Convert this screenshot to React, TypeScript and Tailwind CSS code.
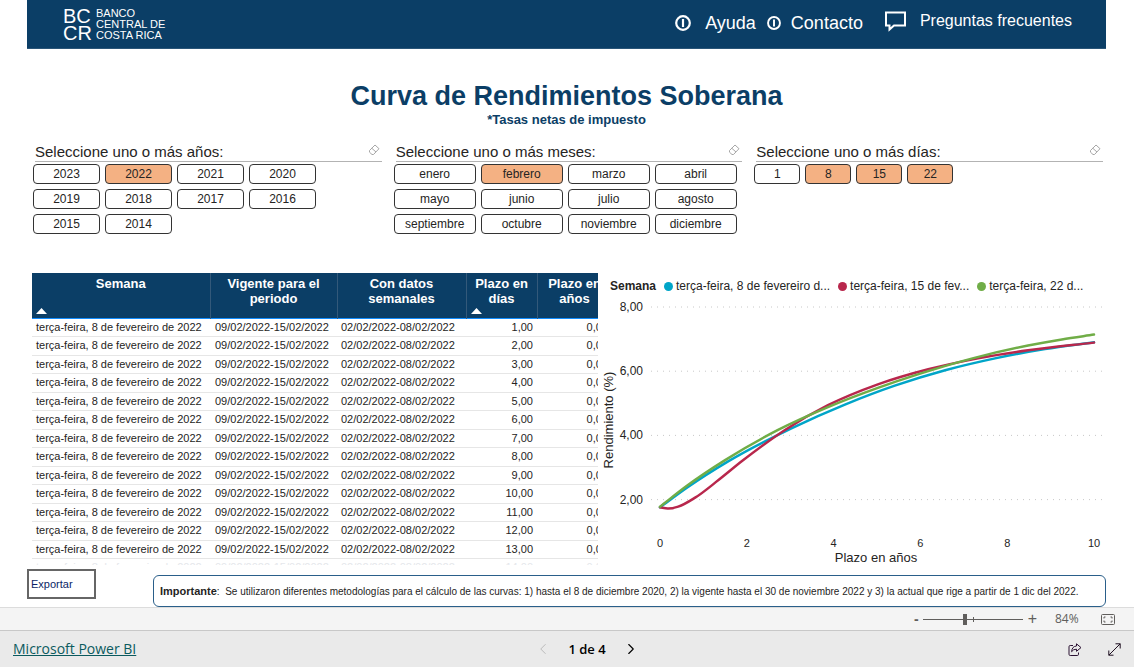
import { useState } from 'react';
import { ChevronLeft, ChevronRight } from 'lucide-react';
import clsx from 'clsx';

const YEARS = ['2023', '2022', '2021', '2020', '2019', '2018', '2017', '2016', '2015', '2014'];
const MONTHS = [
    'enero', 'febrero', 'marzo', 'abril',
    'mayo', 'junio', 'julio', 'agosto',
    'septiembre', 'octubre', 'noviembre', 'diciembre',
];
const DAYS = ['1', '8', '15', '22'];

const ROWS = Array.from({ length: 14 }, (_, i) => ({
    week: 'terça-feira, 8 de fevereiro de 2022',
    period: '09/02/2022-15/02/2022',
    data: '02/02/2022-08/02/2022',
    days: `${i + 1},00`,
    years: '0,00',
}));

type Point = [number, number];

// [plazo en años, rendimiento %]
const SERIES: { label: string; color: string; points: Point[] }[] = [
    {
        label: 'terça-feira, 8 de fevereiro d...',
        color: '#00a5c8',
        points: [[0, 1.76], [0.62, 2.37], [1.57, 3.19], [3.04, 4.23], [4.26, 4.96], [5.41, 5.55], [6.57, 6.03], [7.72, 6.4], [8.87, 6.69], [10, 6.9]],
    },
    {
        label: 'terça-feira, 15 de fev...',
        color: '#b8274c',
        points: [[0, 1.76], [0.18, 1.72], [0.42, 1.78], [0.81, 2.06], [1.34, 2.6], [1.89, 3.2], [2.88, 4.17], [3.87, 4.94], [5.02, 5.59], [6.18, 6.06], [7.33, 6.4], [8.48, 6.65], [10, 6.89]],
    },
    {
        label: 'terça-feira, 22 d...',
        color: '#70ad47',
        points: [[0, 1.78], [0.62, 2.43], [1.5, 3.23], [2.72, 4.17], [3.87, 4.88], [5.02, 5.48], [5.94, 5.9], [7.2, 6.4], [8.48, 6.8], [9.26, 6.99], [10, 7.14]],
    },
];

const scaleX = (t: number) => 58 + t * 43.4;
const scaleY = (v: number) => 10 + (8 - v) * 32.1;

function smoothPath(points: Point[]) {
    const p = points.map(([t, v]) => [scaleX(t), scaleY(v)]);
    // monotone in x, tangents from the neighbouring points
    const slope = p.map((_, i) => {
        const a = p[i - 1];
        const b = p[i];
        const c = p[i + 1];
        if (!a) return (c[1] - b[1]) / (c[0] - b[0]);
        if (!c) return (b[1] - a[1]) / (b[0] - a[0]);
        const h0 = b[0] - a[0];
        const h1 = c[0] - b[0];
        return (((b[1] - a[1]) / h0) * h1 + ((c[1] - b[1]) / h1) * h0) / (h0 + h1);
    });
    let d = `M${p[0][0]} ${p[0][1]}`;
    for (let i = 1; i < p.length; i++) {
        const h = (p[i][0] - p[i - 1][0]) / 3;
        d += `C${p[i - 1][0] + h} ${p[i - 1][1] + h * slope[i - 1]} ${p[i][0] - h} ${p[i][1] - h * slope[i]} ${p[i][0]} ${p[i][1]}`;
    }
    return d;
}

function InfoIcon({ className }: { className?: string }) {
    return (
        <svg className={className} viewBox="0 0 16 16" fill="none" stroke="currentColor">
            <circle cx="8" cy="8" r="6.8" strokeWidth="2.2" />
            <path d="M8 4v8" strokeWidth="2.2" />
        </svg>
    );
}

function Logo() {
    return (
        <svg className="h-10 w-[106px]" viewBox="0 0 106 40" fill="#fff" role="img" aria-label="Banco Central de Costa Rica">
            <g fontSize="20">
                <text x="0" y="19">BC</text>
                <text x="0" y="36">CR</text>
            </g>
            <g fontSize="11">
                <text x="33" y="13">BANCO</text>
                <text x="33" y="24">CENTRAL DE</text>
                <text x="33" y="35">COSTA RICA</text>
            </g>
        </svg>
    );
}

function EraserIcon() {
    return (
        <svg className="h-3 w-3" viewBox="0 0 12 12" fill="none" stroke="#a6a6a6" strokeLinejoin="round">
            <path d="M1.500 6.500 7 1 11 4.700 5.500 10.500H4L1.500 8.200Z" />
            <path d="M3.800 4.300 8 8" />
        </svg>
    );
}

interface SlicerProps {
    title: string;
    options: string[];
    initial: string[];
    gridClass: string;
}

function Slicer({ title, options, initial, gridClass }: SlicerProps) {
    const [selected, setSelected] = useState(initial);

    const toggle = (option: string) => {
        setSelected(selected.includes(option) ? selected.filter((o) => o !== option) : [...selected, option]);
    };

    return (
        <section>
            <div className="mb-0.5 ml-0.5 flex h-5 items-center justify-between border-b border-[#b3b3b3]">
                <h2 className="text-[15px] leading-5 text-[#252423]">{title}</h2>
                <button type="button" aria-label="Borrar selecciones" className="mr-0.5 mb-1" onClick={() => setSelected([])}>
                    <EraserIcon />
                </button>
            </div>
            <div className={clsx('grid gap-[5px]', gridClass)}>
                {options.map((option) => (
                    <button
                        key={option}
                        type="button"
                        aria-pressed={selected.includes(option)}
                        onClick={() => toggle(option)}
                        className={clsx(
                            'h-5 rounded border border-[#333] text-xs leading-none text-[#252423]',
                            selected.includes(option) ? 'bg-[#f4b183]' : 'bg-white'
                        )}
                    >
                        {option}
                    </button>
                ))}
            </div>
        </section>
    );
}

function HeaderCell({ label, sorted }: { label: string; sorted?: boolean }) {
    return (
        <th scope="col" className="relative h-[45px] border-r border-[#33597a] px-1 pt-[3px] align-top text-[13px] leading-[15px] font-bold">
            {label}
            {sorted && (
                <svg className="absolute bottom-1 left-1 h-[6px] w-[11px]" viewBox="0 0 11 6" fill="#fff">
                    <path d="M0 6 5.5 0 11 6Z" />
                </svg>
            )}
        </th>
    );
}

function YieldTable() {
    return (
        <div className="h-[292px] min-w-0 flex-[566] overflow-hidden">
            <table className="w-[580px] table-fixed border-collapse text-[11px] leading-[13px] text-[#252423]">
                <colgroup>
                    <col className="w-[178px]" />
                    <col className="w-[127px]" />
                    <col className="w-[129px]" />
                    <col className="w-[71px]" />
                    <col className="w-[75px]" />
                </colgroup>
                <thead className="border-b border-[#118dff] bg-[#0b3e66] text-white">
                    <tr>
                        <HeaderCell label="Semana" sorted />
                        <HeaderCell label="Vigente para el periodo" />
                        <HeaderCell label="Con datos semanales" />
                        <HeaderCell label="Plazo en días" sorted />
                        <HeaderCell label="Plazo en años" />
                    </tr>
                </thead>
                <tbody>
                    {ROWS.map((row) => (
                        <tr
                            key={row.days}
                            className="border-b border-[#e6e6e6] whitespace-nowrap last:text-gray-200 odd:h-[18px] even:h-[19px]"
                        >
                            <td className="pl-1">{row.week}</td>
                            <td className="pl-[5px]">{row.period}</td>
                            <td className="pl-1">{row.data}</td>
                            <td className="pr-1 text-right">{row.days}</td>
                            <td className="pr-1 text-right">{row.years}</td>
                        </tr>
                    ))}
                </tbody>
            </table>
        </div>
    );
}

function YieldChart() {
    return (
        <div className="min-w-0 flex-[504]">
            <div className="flex h-6 items-center gap-2 pt-0.5 pl-2 text-xs whitespace-nowrap text-[#252423]">
                <span className="font-bold">Semana</span>
                {SERIES.map((s) => (
                    <span key={s.label} className="flex items-center gap-[3px]">
                        <svg className="h-[9px] w-[9px]" viewBox="0 0 9 9">
                            <circle cx="4.5" cy="4.5" r="4.5" fill={s.color} />
                        </svg>
                        {s.label}
                    </span>
                ))}
            </div>
            <svg className="w-full" viewBox="0 0 504 268" fill="#252423" fontSize="12">
                {[8, 6, 4, 2].map((v) => (
                    <g key={v}>
                        <text x="41" y={scaleY(v) + 4} textAnchor="end">{`${v},00`}</text>
                        <path d={`M49 ${scaleY(v)}H500`} stroke="#c8c8c8" strokeDasharray="1 5" />
                    </g>
                ))}
                {[0, 2, 4, 6, 8, 10].map((t) => (
                    <text key={t} x={scaleX(t)} y="250" textAnchor="middle" fontSize="11">{t}</text>
                ))}
                <text x="274" y="265" textAnchor="middle" fontSize="13">Plazo en años</text>
                <text transform="translate(11 123) rotate(-90)" textAnchor="middle" fontSize="13">Rendimiento (%)</text>
                {SERIES.map((s) => (
                    <path key={s.label} d={smoothPath(s.points)} fill="none" stroke={s.color} strokeWidth="2.5" strokeLinecap="round" />
                ))}
            </svg>
        </div>
    );
}

function ZoomBar() {
    const [zoom, setZoom] = useState(42);

    return (
        <div className="flex h-[23px] items-center justify-end border-t border-[#dcdcdc] bg-[#f4f4f4] pr-[19px] text-[#605e5c]">
            <button type="button" aria-label="Alejar" className="mr-1 text-sm leading-none font-bold" onClick={() => setZoom(zoom - 5)}>-</button>
            <div className="relative flex h-3 w-[100px] items-center">
                <span className="absolute left-[50px] h-[5px] w-px bg-[#605e5c]" />
                <input
                    type="range"
                    aria-label="Zoom"
                    value={zoom}
                    onChange={(e) => setZoom(Number(e.target.value))}
                    className="h-px w-full appearance-none bg-[#605e5c] [&::-webkit-slider-thumb]:h-[11px] [&::-webkit-slider-thumb]:w-1 [&::-webkit-slider-thumb]:appearance-none [&::-webkit-slider-thumb]:bg-[#605e5c]"
                />
            </div>
            <button type="button" aria-label="Acercar" className="ml-[5px] text-base leading-none" onClick={() => setZoom(zoom + 5)}>+</button>
            <span className="ml-[18px] w-[26px] font-['Open_Sans',sans-serif] text-xs">84%</span>
            <button type="button" aria-label="Ajustar a la página" className="ml-5">
                <svg className="h-[11px] w-[14px]" viewBox="0 0 14 11" fill="none" stroke="#605e5c">
                    <rect x=".5" y=".5" width="13" height="10" rx="1" />
                    <path d="M3 4.500V3H4.500M9.500 3H11V4.500M11 6.500V8H9.500M4.500 8H3V6.500" />
                </svg>
            </button>
        </div>
    );
}

function Footer() {
    return (
        <footer className="grid flex-1 grid-cols-3 items-center border-t border-[#c8c8c8] bg-[#eaeaea] px-[13px] py-2 font-['Open_Sans',sans-serif] text-black">
            <a href="#" className="text-sm leading-5 text-[#0b5a5e] underline">Microsoft Power BI</a>
            <div className="ml-10 flex items-center justify-center gap-4 text-[13px] leading-5 font-semibold">
                <button type="button" aria-label="Página anterior" disabled>
                    <ChevronLeft size={18} strokeWidth={1.2} color="#b5b5b5" />
                </button>
                <span>1 de 4</span>
                <button type="button" aria-label="Página siguiente">
                    <ChevronRight size={18} strokeWidth={1.5} />
                </button>
            </div>
            <div className="flex items-center justify-end gap-[26px]">
                <button type="button" aria-label="Compartir">
                    <svg className="h-[13px] w-[14px]" viewBox="0 0 14 13" fill="none" stroke="#2b1233" strokeLinejoin="round">
                        <path d="M5 2.500H2.200Q1 2.500 1 3.700V11.300Q1 12.500 2.200 12.500H9.300Q10.500 12.500 10.500 11.300V9.500" />
                        <path d="M8.500.8 13 4.600 8.500 8.300V6.200Q5.300 6 3.600 8.700 4 3.300 8.500 3Z" />
                    </svg>
                </button>
                <button type="button" aria-label="Pantalla completa">
                    <svg className="h-[13px] w-[13px]" viewBox="0 0 13 13" fill="none" stroke="#1f1022">
                        <path d="M.8 12.200 12.200.8M7.500.8H12.200V5.500M.8 7.500V12.200H5.500" />
                    </svg>
                </button>
            </div>
        </footer>
    );
}

export default function App() {
    return (
        <div className="flex min-h-screen flex-col bg-white font-['Liberation_Sans',Arial,sans-serif]">
            <main className="pr-7 pl-[27px]">
                {/* Header */}
                <header className="flex h-[49px] items-start justify-between border-b border-[#2a5578] bg-[#0b3e66] pr-[34px] pl-9 text-white">
                    <div className="pt-1">
                        <Logo />
                    </div>
                    <nav className="flex h-[46px] items-center text-lg leading-6">
                        <a href="#" className="flex items-center gap-[14px]">
                            <InfoIcon className="h-4 w-4" />
                            Ayuda
                        </a>
                        <a href="#" className="ml-[11px] flex items-center gap-[10px]">
                            <InfoIcon className="h-[14px] w-[14px]" />
                            Contacto
                        </a>
                        <a href="#" className="mb-1 ml-[22px] flex items-center gap-[14px] text-base leading-6">
                            <svg className="h-[21px] w-[21px]" viewBox="0 0 21 21" fill="none" stroke="currentColor" strokeWidth="2">
                                <path d="M1 1.500H20V14.500H9L4.500 18.500V14.500H1Z" />
                            </svg>
                            Preguntas frecuentes
                        </a>
                    </nav>
                </header>

                {/* Title */}
                <div className="mt-[31px] mb-[15px] text-center text-[#0b3e66]">
                    <h1 className="text-[27px] leading-8 font-bold">Curva de Rendimientos Soberana</h1>
                    <p className="text-[13px] leading-[15px] font-bold">*Tasas netas de impuesto</p>
                </div>

                {/* Slicers */}
                <div className="mr-[3px] ml-[6px] grid grid-cols-3 gap-3">
                    <Slicer title="Seleccione uno o más años:" options={YEARS} initial={['2022']} gridClass="grid-cols-[repeat(4,67px)]" />
                    <Slicer title="Seleccione uno o más meses:" options={MONTHS} initial={['febrero']} gridClass="grid-cols-[repeat(4,82px)]" />
                    <Slicer title="Seleccione uno o más días:" options={DAYS} initial={['8', '15', '22']} gridClass="grid-cols-[repeat(4,46px)]" />
                </div>

                {/* Table and chart */}
                <div className="mt-[39px] ml-[5px] flex gap-1">
                    <YieldTable />
                    <YieldChart />
                </div>

                {/* Export and note */}
                <div className="flex items-start pt-1">
                    <button type="button" className="h-[30px] w-[69px] border-2 border-[#666] pl-0.5 text-left text-[11px] text-[#0b1f66]">
                        Exportar
                    </button>
                    <p className="mt-[6px] ml-[57px] flex h-8 flex-1 items-center rounded-md border border-[#2a5f8a] pl-[6px] text-[10px] whitespace-pre text-[#252423]">
                        <strong className="text-[11px]">Importante</strong>
                        {':  Se utilizaron diferentes metodologías para el cálculo de las curvas: 1) hasta el 8 de diciembre 2020, 2) la vigente hasta el 30 de noviembre 2022 y 3) la actual que rige a partir de 1 dic del 2022.'}
                    </p>
                </div>
            </main>
            <ZoomBar />
            <Footer />
        </div>
    );
}
